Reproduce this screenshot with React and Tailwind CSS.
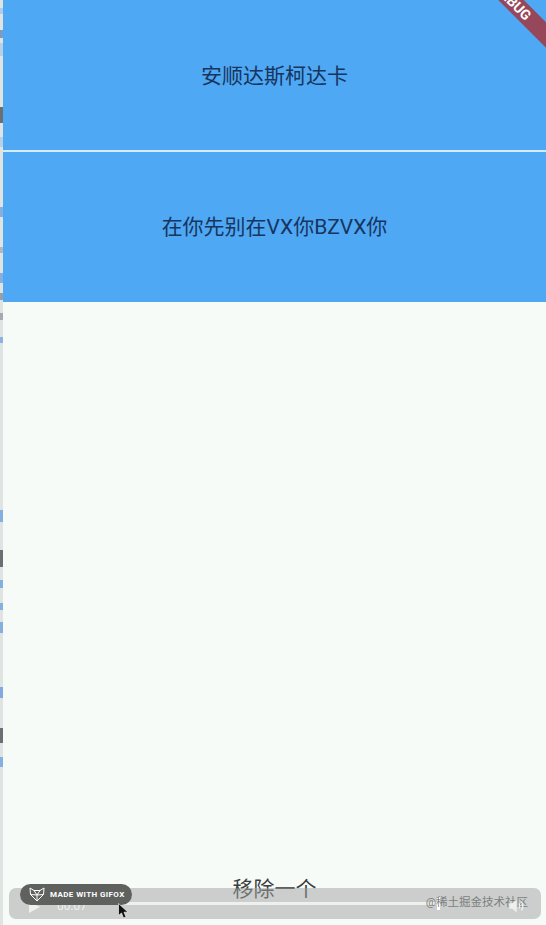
const cjk = "font-['Roboto','Noto_Sans_CJK_SC',sans-serif]"

// bits of the page behind the window, cut off by the left edge
const strip = [
  ['mt-[8px]', 'h-[6px]', 'bg-[#9cc3ec]'],
  ['mt-[16px]', 'h-[8px]', 'bg-[#4f7fb8]'],
  ['mt-[5px]', 'h-[13px]', 'bg-[#a6c8ec]'],
  ['mt-[51px]', 'h-[16px]', 'bg-[#3a3f45]'],
  ['mt-[14px]', 'h-[10px]', 'bg-[#a6c8ec]'],
  ['mt-[60px]', 'h-[10px]', 'bg-[#5e9be0]'],
  ['mt-[30px]', 'h-[6px]', 'bg-[#9aa8b8]'],
  ['mt-[20px]', 'h-[10px]', 'bg-[#5e9be0]'],
  ['mt-[10px]', 'h-[7px]', 'bg-[#7a8490]'],
  ['mt-[13px]', 'h-[7px]', 'bg-[#8a929c]'],
  ['mt-[17px]', 'h-[6px]', 'bg-[#6a9fdc]'],
  ['mt-[167px]', 'h-[12px]', 'bg-[#5e9be0]'],
  ['mt-[28px]', 'h-[17px]', 'bg-[#3a3f45]'],
  ['mt-[13px]', 'h-[8px]', 'bg-[#5e9be0]'],
  ['mt-[15px]', 'h-[7px]', 'bg-[#5e9be0]'],
  ['mt-[12px]', 'h-[11px]', 'bg-[#5e9be0]'],
  ['mt-[54px]', 'h-[11px]', 'bg-[#5e8fe0]'],
  ['mt-[30px]', 'h-[15px]', 'bg-[#3a3f45]'],
  ['mt-[14px]', 'h-[10px]', 'bg-[#5e9be0]'],
]

function Panel({ children }) {
  return (
    <div className="flex h-[150px] items-center justify-center bg-[#4fa8f3] pt-[3px] text-[21px] text-[#17355f]">
      {children}
    </div>
  )
}

function FoxLogo() {
  return (
    <svg width="16" height="15" viewBox="0 0 16 15" fill="none" stroke="white" strokeWidth="1" strokeLinejoin="round">
      <path d="M1 1 L5 3.5 H11 L15 1 L14.5 7.5 L8 14 L1.5 7.5 Z" />
      <path d="M5 3.5 L8 8 L11 3.5 M1.5 7.5 L8 8 L14.5 7.5 M8 8 V14" />
    </svg>
  )
}

export default function App() {
  return (
    <div className={`relative flex h-[925px] w-[546px] overflow-hidden bg-[#f6fbf8] ${cjk}`}>
      {/* left edge of the window behind */}
      <div className="flex w-[3px] shrink-0 flex-col bg-[#dfe3e1]">
        {strip.map(([mt, h, bg], i) => (
          <div key={i} className={`${mt} ${h} ${bg} w-[3px] opacity-70 blur-[0.6px]`} />
        ))}
      </div>

      <div className="flex min-w-0 flex-1 flex-col">
        <Panel>安顺达斯柯达卡</Panel>
        <div className="h-[1.5px] bg-[#d6ebfb]" />
        <Panel>在你先别在VX你BZVX你</Panel>
        <div className="flex flex-1 items-end justify-center pb-[24px] text-[21px] leading-[24px] text-[#3c3f3f]">
          移除一个
        </div>
      </div>

      {/* debug ribbon */}
      <div className="absolute right-[-27px] top-[-7px] flex h-[18px] w-[120px] rotate-45 items-center justify-center bg-[#96475a] text-[14px] font-bold text-white">
        DEBUG
      </div>

      {/* video controls */}
      <div className="absolute bottom-[6px] left-[9px] right-[5px] flex h-[31px] items-center rounded-[7px] bg-[#a0a29f]/50 pl-[19px] pr-[14px] blur-[0.4px]">
        <svg width="12" height="12" viewBox="0 0 12 12" className="mt-[6px] shrink-0" fill="#eef0ee">
          <path d="M1 0 L12 6 L1 12 Z" />
        </svg>
        <span className="ml-[17px] mt-[4px] w-[45px] shrink-0 text-[12px] text-[#eef0ee]">00:07</span>
        <div className="relative ml-[18px] h-[3px] w-[320px] shrink-0 bg-[#eef0ee]">
          <div className="absolute right-0 top-[-5px] h-[13px] w-[3px] bg-white" />
        </div>
      </div>
      <div className="absolute bottom-[15px] right-[18px] text-[11.5px] leading-[16px] text-[#7d8080]">
        @稀土掘金技术社区
      </div>
      <svg className="absolute left-[509px] top-[899px]" width="16" height="14" viewBox="0 0 16 14" fill="none" stroke="#eef0ee" strokeWidth="1.4">
        <path d="M1 5 H3.5 L7 2 V12 L3.5 9 H1 Z" fill="#eef0ee" />
        <path d="M10 4.5 Q11.5 7 10 9.5 M12.5 2.5 Q15 7 12.5 11.5" />
      </svg>

      {/* gifox badge */}
      <div className="absolute left-[20px] top-[884px] flex h-[21px] w-[112px] items-center gap-[5px] rounded-full bg-[#5f615f] pl-[9px]">
        <FoxLogo />
        <span className="whitespace-nowrap text-[8px] font-bold tracking-[0.4px] text-white">MADE WITH GIFOX</span>
      </div>

      {/* mouse cursor */}
      <svg className="absolute left-[118px] top-[903px]" width="11" height="16" viewBox="0 0 11 16">
        <path d="M0.5 0.5 V12.5 L3.5 10 L5.5 15 L8 14 L6 9.2 H10 Z" fill="#111" stroke="white" strokeWidth="0.6" />
      </svg>
    </div>
  )
}
